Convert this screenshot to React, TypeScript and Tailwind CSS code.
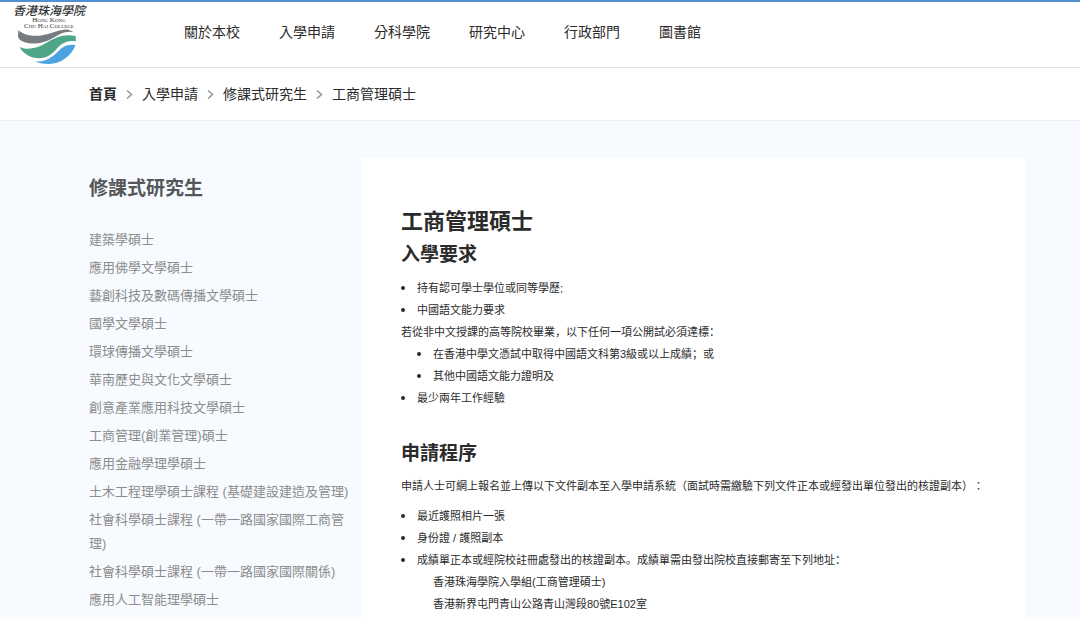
import { ReactNode } from 'react';

const navItems = ['關於本校', '入學申請', '分科學院', '研究中心', '行政部門', '圖書館'];

const breadcrumbs = ['首頁', '入學申請', '修課式研究生', '工商管理碩士'];

const programmes = [
  '建築學碩士',
  '應用佛學文學碩士',
  '藝創科技及數碼傳播文學碩士',
  '國學文學碩士',
  '環球傳播文學碩士',
  '華南歷史與文化文學碩士',
  '創意產業應用科技文學碩士',
  '工商管理(創業管理)碩士',
  '應用金融學理學碩士',
  '土木工程理學碩士課程 (基礎建設建造及管理)',
  '社會科學碩士課程 (一帶一路國家國際工商管理)',
  '社會科學碩士課程 (一帶一路國家國際關係)',
  '應用人工智能理學碩士',
];

function Logo() {
  return (
    <svg width="80" height="64" viewBox="0 0 80 64" overflow="visible" role="img" aria-label="香港珠海學院">
      <g fill="#2f3336" textAnchor="middle">
        <text x="41" y="13" fontSize="12" fontStyle="italic" fontWeight="500" fontFamily="'Noto Sans CJK TC', sans-serif">
          香港珠海學院
        </text>
        <g fontFamily="'Liberation Serif', serif" fontSize="7" style={{ fontVariantCaps: 'small-caps' }}>
          <text x="41" y="20">
            Hong Kong
          </text>
          <text x="41" y="26">
            Chu Hai College
          </text>
        </g>
      </g>
      <path
        d="M10.500 28C15 33 24 34.500 33 33.500C44 32 54 26 61 28C64 29 66 31 67 30.500C58 28 52 32 46 35.500C37 41 28 42.500 20 41C14 40 9.500 37 10 33.500Z"
        fill="#767c81"
      />
      <path
        d="M11.500 45C19 48.500 29 46.500 38 41C47 35.500 56 31.500 67.500 34C68 36 68 38 67.500 39.500C60 38 54 41 49 46.500C43 53.500 37 57 29 56C21 55.500 15 51 11.500 45Z"
        fill="#4fa686"
      />
      <path d="M27 59.500C36 60 43 56.500 49 50.500C54 45 59 41.500 67.500 43C64 53 53 62 41 62C35 62 30 61 27 59.500Z" fill="#4ba3e2" />
    </svg>
  );
}

function Bullet({ children }: { children: ReactNode }) {
  return (
    <li className="flex items-center gap-3 before:size-1 before:shrink-0 before:rounded-full before:bg-[#2b2b2b]">
      <span>{children}</span>
    </li>
  );
}

export default function App() {
  return (
    <div className="flex min-h-screen flex-col bg-white font-['Liberation_Sans','Noto_Sans_CJK_TC',sans-serif] text-[#2b2b2b]">
      <header className="flex items-start border-t-2 border-b border-t-[#5090d3] border-b-[#e2e2e2] pb-px">
        <a href="#" className="ml-2 block">
          <Logo />
        </a>
        <nav className="ml-24 flex gap-[39px] pt-5 text-sm">
          {navItems.map((item) => (
            <a key={item} href="#">
              {item}
            </a>
          ))}
        </nav>
      </header>

      <nav aria-label="breadcrumb" className="border-b border-[#edf0f2] py-4 pl-[89px] text-sm">
        <ol className="flex">
          {breadcrumbs.map((crumb, i) => (
            <li key={crumb} className="flex items-center">
              {i > 0 && (
                <svg width="25" height="10" viewBox="0 0 25 10" fill="none" stroke="#999" strokeWidth="1.6">
                  <path d="M10 1.500l4.500 4-4.500 4" />
                </svg>
              )}
              <a href="#" className={i === 0 ? 'font-bold' : ''}>
                {crumb}
              </a>
            </li>
          ))}
        </ol>
      </nav>

      <div className="flex flex-1 bg-[#f7fbff] pt-[37px] pr-[55px] pl-[89px]">
        <aside className="w-[272px] shrink-0 pt-[17px] pr-2">
          <h2 className="text-[19px] leading-7 font-bold text-[#555759]">修課式研究生</h2>
          <ul className="mt-[25px] flex flex-col gap-1 text-[13px] leading-6 text-[#8c8c8c]">
            {programmes.map((name) => (
              <li key={name}>
                <a href="#">{name}</a>
              </li>
            ))}
          </ul>
        </aside>

        <main className="min-w-0 flex-1 bg-white px-10 pt-[47px] font-['Liberation_Sans','Noto_Sans_CJK_SC',sans-serif] text-[11px] leading-[22px] [text-spacing-trim:space-all]">
          <h1 className="text-[22px] leading-[34px] font-bold">工商管理碩士</h1>
          <h2 className="text-[19px] leading-8 font-bold">入學要求</h2>
          <ul className="mt-1.5">
            <Bullet>持有認可學士學位或同等學歷;</Bullet>
            <Bullet>中國語文能力要求</Bullet>
            <li>
              若從非中文授課的高等院校畢業，以下任何一項公開試必須達標：
              <ul className="pl-4">
                <Bullet>在香港中學文憑試中取得中國語文科第3級或以上成績；或</Bullet>
                <Bullet>其他中國語文能力證明及</Bullet>
              </ul>
            </li>
            <Bullet>最少兩年工作經驗</Bullet>
          </ul>

          <h2 className="mt-[29px] text-[19px] leading-8 font-bold">申請程序</h2>
          <p className="mt-1">
            申請人士可網上報名並上傳以下文件副本至入學申請系統（面試時需繳驗下列文件正本或經發出單位發出的核證副本）
            <span className="font-['Noto_Sans_CJK_TC',sans-serif]">：</span>
          </p>
          <ul className="mt-2">
            <Bullet>最近護照相片一張</Bullet>
            <Bullet>身份證 / 護照副本</Bullet>
            <Bullet>成績單正本或經院校註冊處發出的核證副本。成績單需由發出院校直接郵寄至下列地址：</Bullet>
            <li className="pl-8">香港珠海學院入學組(工商管理碩士)</li>
            <li className="pl-8">香港新界屯門青山公路青山灣段80號E102室</li>
          </ul>
        </main>
      </div>
    </div>
  );
}
